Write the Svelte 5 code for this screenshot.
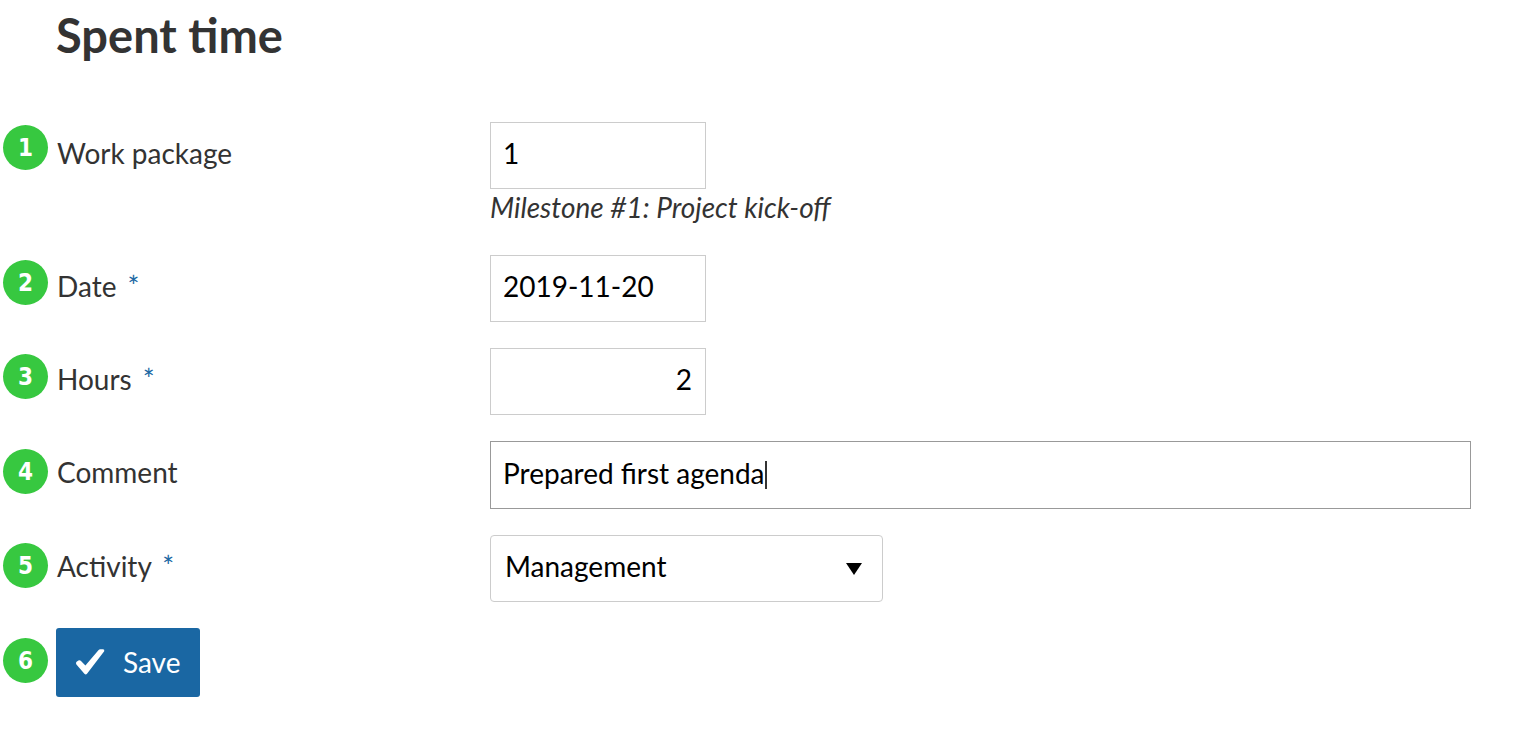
<script>
  let workPackage = $state('1');
  let date = $state('2019-11-20');
  let hours = $state('2');
  let comment = $state('Prepared first agenda');
  let activity = $state('Management');
  const steps = [1, 2, 3, 4, 5, 6];
</script>

<main>
  <h1>Spent time</h1>

  <div class="layout">
    <ol class="steps">
      {#each steps as step}
        <li>{step}</li>
      {/each}
    </ol>

    <form onsubmit={(event) => event.preventDefault()}>
      <div class="row">
        <label for="work-package">Work package</label>
        <div class="field">
          <input id="work-package" class="short" type="text" bind:value={workPackage} />
          <em>Milestone #1: Project kick-off</em>
        </div>
      </div>

      <div class="row">
        <label for="date">Date <span class="required">*</span></label>
        <div class="field">
          <input id="date" class="short" type="text" bind:value={date} />
        </div>
      </div>

      <div class="row">
        <label for="hours">Hours <span class="required">*</span></label>
        <div class="field">
          <input id="hours" class="short number" type="text" inputmode="decimal" bind:value={hours} />
        </div>
      </div>

      <div class="row">
        <label for="comment">Comment</label>
        <div class="field">
          <input id="comment" class="active" type="text" bind:value={comment} />
          <span class="caret"></span>
        </div>
      </div>

      <div class="row">
        <label for="activity">Activity <span class="required">*</span></label>
        <div class="field select">
          <select id="activity" bind:value={activity}>
            <option>Management</option>
          </select>
          <svg class="arrow" viewBox="0 0 16 12" width="16" height="12" aria-hidden="true">
            <path d="M0 0H16L8 12Z" fill="#000" />
          </svg>
        </div>
      </div>

      <button type="submit">
        <svg viewBox="0 0 30 28" width="30" height="28" aria-hidden="true">
          <path
            d="M1.4 16.6Q0.4 15 1.6 13.8L3.4 12.6Q4.8 11.8 6 13L10.4 17.6L23.4 2.2Q24.2 1.2 25.4 1.2H28Q29.8 1.4 29.2 3.2L12 25.8Q10.8 27.4 9.4 25.8Z"
            fill="#fff"
          />
        </svg>
        Save
      </button>
    </form>
  </div>
</main>

<style>
  :global(body) {
    margin: 0;
    background: #fff;
  }

  main {
    padding: 7px 63px 46px 3px;
    color: #333;
    font-family: Lato, Carlito, sans-serif;
    font-size: 28px;
    line-height: 36px;
  }

  h1 {
    margin: 0 0 59px 53px;
    font-size: 47px;
    line-height: 56px;
    font-weight: 700;
  }

  .layout {
    display: grid;
    grid-template-columns: 45px minmax(0, 1fr);
    column-gap: 8px;
  }

  .steps {
    display: flex;
    flex-direction: column;
    justify-content: space-between;
    margin: 0;
    padding: 3px 0 14px;
    list-style: none;
  }

  .steps li {
    height: 45px;
    border-radius: 50%;
    background: #37c840;
    color: #fff;
    font-family: "DejaVu Sans Condensed", "DejaVu Sans", sans-serif;
    font-size: 24px;
    font-weight: 700;
    line-height: 47px;
    text-align: center;
  }

  .steps li:first-child {
    margin-bottom: 40px;
  }

  form {
    display: flex;
    flex-direction: column;
    align-items: stretch;
    gap: 26px;
  }

  .row {
    display: grid;
    grid-template-columns: 434px minmax(0, 1fr);
  }

  label {
    padding: 13px 0 0 1px;
  }

  .required {
    margin-left: 4px;
    color: #1a67a3;
  }

  .field {
    position: relative;
  }

  input,
  select {
    display: block;
    box-sizing: border-box;
    width: 100%;
    height: 67px;
    margin: 0;
    padding: 0 13px 5px 12px;
    border: 1px solid #ccc;
    border-radius: 0;
    outline: none;
    background: #fff;
    color: #000;
    font: inherit;
  }

  .short {
    width: 216px;
  }

  .number {
    text-align: right;
  }

  .active {
    height: 68px;
    border-color: #999;
  }

  .caret {
    position: absolute;
    top: 20px;
    left: 275px;
    width: 2px;
    height: 28px;
    background: #333;
  }

  em {
    display: block;
    height: 40px;
  }

  .select {
    max-width: 393px;
  }

  select {
    padding-left: 14px;
    border-radius: 4px;
    appearance: none;
  }

  .arrow {
    position: absolute;
    top: 28px;
    right: 21px;
    pointer-events: none;
  }

  button {
    display: flex;
    align-items: center;
    align-self: flex-start;
    gap: 18px;
    height: 69px;
    margin: 0;
    padding: 0 20px 2px 19px;
    border: 0;
    border-radius: 3px;
    background: #1a67a3;
    color: #fff;
    font: inherit;
  }
</style>
